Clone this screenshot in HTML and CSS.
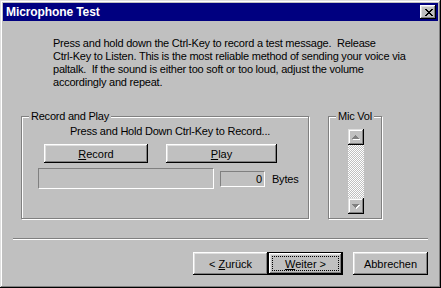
FILE: index.html
```html
<!DOCTYPE html>
<html lang="en">
<head>
  <meta charset="UTF-8" />
  <title>Microphone Test</title>
  <link rel="stylesheet" href="styles.css">
</head>
<body>
  <div class="window">
    <div class="titlebar">
      <span class="title">Microphone Test</span>
      <button class="close" title="Close">
        <svg width="8" height="7" viewBox="0 0 8 7" shape-rendering="crispEdges"><path fill="#000" d="M0 0h2v1H0zM6 0h2v1H6zM1 1h2v1H1zM5 1h2v1H5zM2 2h4v1H2zM3 3h2v1H3zM2 4h4v1H2zM1 5h2v1H1zM5 5h2v1H5zM0 6h2v1H0zM6 6h2v1H6z"/></svg>
      </button>
    </div>

    <div class="content">
      <p class="intro">
        Press and hold down the Ctrl-Key to record a test message.&nbsp; Release<br>
        Ctrl-Key to Listen. This is the most reliable method of sending your voice via<br>
        paltalk.&nbsp; If the sound is either too soft or too loud, adjust the volume<br>
        accordingly and repeat.
      </p>

      <div class="groups">
        <div class="group rec">
          <span class="group-title">Record and Play</span>
          <div class="hold">Press and Hold Down Ctrl-Key to Record...</div>
          <div class="rec-buttons">
            <button class="btn record"><u>R</u>ecord</button>
            <button class="btn play"><u>P</u>lay</button>
          </div>
          <div class="meter-row">
            <div class="meter"></div>
            <div class="bytes">0</div>
            <span class="bytes-label">Bytes</span>
          </div>
        </div>

        <div class="group vol">
          <span class="group-title">Mic Vol</span>
          <div class="scroll">
            <div class="arrow">
              <svg width="8" height="5" viewBox="0 0 8 5" shape-rendering="crispEdges"><path fill="#fff" d="M4 1h1v1H4zM3 2h3v1H3zM2 3h5v1H2zM1 4h7v1H1z"/><path fill="#808080" d="M3 0h1v1H3zM2 1h3v1H2zM1 2h5v1H1zM0 3h7v1H0z"/></svg>
            </div>
            <div class="track"></div>
            <div class="arrow">
              <svg width="8" height="5" viewBox="0 0 8 5" shape-rendering="crispEdges"><path fill="#fff" d="M1 1h7v1H1zM2 2h5v1H2zM3 3h3v1H3zM4 4h1v1H4z"/><path fill="#808080" d="M0 0h7v1H0zM1 1h5v1H1zM2 2h3v1H2zM3 3h1v1H3z"/></svg>
            </div>
          </div>
        </div>
      </div>

      <hr class="sep">

      <div class="actions">
        <button class="btn wide">&lt; <u>Z</u>urück</button>
        <button class="btn wide default"><u>W</u>eiter &gt;</button>
        <button class="btn wide cancel">Abbrechen</button>
      </div>
    </div>
  </div>
</body>
</html>
```

FILE: styles.css
```css
body {
  margin: 0;
  font-family: "Liberation Sans", Arial, sans-serif;
  font-size: 11px;
  letter-spacing: -0.22px;
  color: #000;
  background: #c0c0c0;
}

.window {
  width: 441px;
  height: 288px;
  box-sizing: border-box;
  padding: 3px;
  background: #c0c0c0;
  box-shadow: inset -1px -1px #000, inset 1px 1px #dfdfdf, inset -2px -2px #808080, inset 2px 2px #fff;
  display: flex;
  flex-direction: column;
}

.titlebar {
  height: 18px;
  background: #000080;
  color: #fff;
  display: flex;
  align-items: center;
  justify-content: space-between;
  padding: 0 2px 0 3px;
}

.title {
  font-weight: bold;
  font-size: 12px;
  letter-spacing: -0.1px;
}

.close {
  width: 16px;
  height: 14px;
  padding: 0 0 0 1px;
  border: 0;
  background: #c0c0c0;
  box-shadow: inset -1px -1px #000, inset 1px 1px #fff, inset -2px -2px #808080, inset 2px 2px #dfdfdf;
  display: flex;
  align-items: center;
  justify-content: center;
}

.content {
  flex: 1;
  padding: 0 10px;
}

.intro {
  margin: 16px 0 0 40px;
  line-height: 13px;
  white-space: nowrap;
}

.groups {
  display: flex;
  gap: 19px;
  margin: 27px 0 0 8px;
}

.group {
  position: relative;
  box-sizing: border-box;
  height: 103px;
  border: 1px solid #808080;
  box-shadow: 1px 1px #fff, inset 1px 1px #fff;
}

.group-title {
  position: absolute;
  top: -7px;
  left: 7px;
  padding: 0 2px;
  line-height: 13px;
  background: #c0c0c0;
}

.rec {
  width: 288px;
}

.vol {
  width: 54px;
}

.hold {
  margin: 8px 0 0 48px;
  line-height: 13px;
}

.rec-buttons {
  display: flex;
  gap: 18px;
  margin: 6px 0 0 22px;
}

.btn {
  font: inherit;
  color: #000;
  padding: 0;
  border: 0;
  background: #c0c0c0;
  box-shadow: inset -1px -1px #000, inset 1px 1px #fff, inset -2px -2px #808080, inset 2px 2px #dfdfdf;
}

.record {
  width: 104px;
  height: 19px;
}

.play {
  width: 111px;
  height: 19px;
}

.meter-row {
  display: flex;
  align-items: center;
  margin: 5px 0 0 16px;
}

.meter {
  width: 176px;
  height: 21px;
  box-sizing: border-box;
  border: 1px solid;
  border-color: #808080 #fff #fff #808080;
}

.bytes {
  width: 45px;
  height: 16px;
  box-sizing: border-box;
  margin-left: 6px;
  padding-right: 2px;
  border: 1px solid;
  border-color: #808080 #fff #fff #808080;
  text-align: right;
  line-height: 14px;
}

.bytes-label {
  margin-left: 7px;
}

.scroll {
  display: flex;
  flex-direction: column;
  width: 16px;
  height: 85px;
  margin: 12px 0 0 19px;
}

.arrow {
  height: 16px;
  flex: none;
  display: flex;
  align-items: center;
  justify-content: center;
  background: #c0c0c0;
  box-shadow: inset -1px -1px #000, inset 1px 1px #dfdfdf, inset -2px -2px #808080, inset 2px 2px #fff;
}

.track {
  flex: 1;
  background-image: repeating-conic-gradient(#fff 0 25%, #c0c0c0 0 50%);
  background-size: 2px 2px;
}

.sep {
  margin: 19px 0 0;
  height: 0;
  border: 0;
  border-top: 1px solid #808080;
  border-bottom: 1px solid #fff;
}

.actions {
  display: flex;
  justify-content: flex-end;
  margin-top: 12px;
}

.wide {
  width: 75px;
  height: 23px;
}

.default {
  box-shadow: inset -1px -1px #000, inset 1px 1px #000, inset -2px -2px #000, inset 2px 2px #fff, inset -3px -3px #808080, inset 3px 3px #dfdfdf;
  outline: 1px dotted #000;
  outline-offset: -5px;
}

.cancel {
  margin-left: 10px;
}
```
